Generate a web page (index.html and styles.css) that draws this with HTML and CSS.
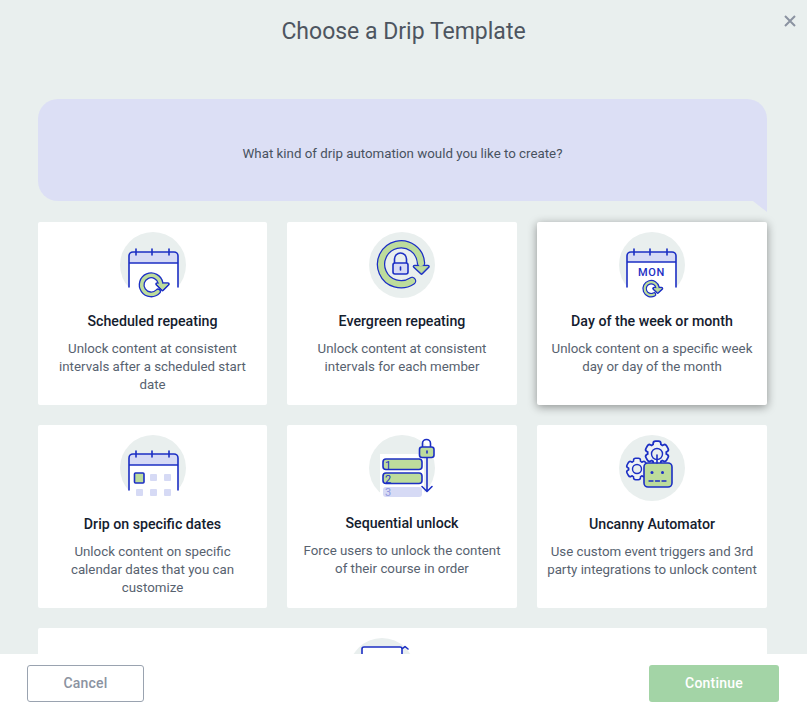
FILE: index.html
```html
<!DOCTYPE html>
<html lang="en">
<head>
<meta charset="UTF-8">
<meta name="viewport" content="width=device-width, initial-scale=1.0">
<title>Choose a Drip Template</title>
<link rel="stylesheet" href="styles.css">
</head>
<body>
    <div class="modal">
        <header class="modal-head">
            <h1>Choose a Drip Template</h1>
            <button class="close" aria-label="Close">
                <svg width="12" height="12" viewBox="0 0 12 12"><path d="M1 1L11 11M11 1L1 11"/></svg>
            </button>
        </header>

        <div class="modal-body">
            <div class="bubble">What kind of drip automation would you like to create?</div>

            <div class="cards">
                <div class="card">
                    <svg class="icon" width="80" height="80" viewBox="0 0 80 80">
                        <circle class="disc" cx="40" cy="40" r="33"/>
                        <rect class="paper" x="16" y="38" width="49" height="38"/>
                        <path class="lilac" d="M16 38V31a4 4 0 0 1 4-4H61a4 4 0 0 1 4 4V38Z"/>
                        <path class="line" d="M16 62V31a4 4 0 0 1 4-4H61a4 4 0 0 1 4 4V62M16 38H65M23 24V30M39 24V30M56 24V30"/>
                        <path class="ring-out" d="M45 66.500A9.500 9.500 0 1 1 47.500 58"/>
                        <path class="head-out" d="M44 59H55L49.500 64.500Z"/>
                        <path class="ring-in" d="M45 66.500A9.500 9.500 0 1 1 47.500 58"/>
                        <path class="head-in" d="M44 59H55L49.500 64.500Z"/>
                    </svg>
                    <h3>Scheduled repeating</h3>
                    <p>Unlock content at consistent intervals after a scheduled start date</p>
                </div>

                <div class="card">
                    <svg class="icon" width="80" height="80" viewBox="0 0 80 80">
                        <circle class="disc" cx="40" cy="40" r="33"/>
                        <path class="ring-out big" d="M50 56A20 20 0 1 1 59 38"/>
                        <path class="head-out" d="M52.500 41.500H66L59.500 48Z"/>
                        <path class="ring-in big" d="M50 56A20 20 0 1 1 59 38"/>
                        <path class="head-in" d="M52.500 41.500H66L59.500 48Z"/>
                        <path class="line" d="M32.500 38V34a6 6 0 0 1 12 0V38"/>
                        <rect class="lilac line" x="31" y="38" width="15" height="11" rx="2"/>
                        <path class="line" d="M38.500 42V45"/>
                    </svg>
                    <h3>Evergreen repeating</h3>
                    <p>Unlock content at consistent intervals for each member</p>
                </div>

                <div class="card selected">
                    <svg class="icon" width="80" height="80" viewBox="0 0 80 80">
                        <circle class="disc" cx="40" cy="40" r="33"/>
                        <rect class="paper" x="15" y="37" width="49" height="38"/>
                        <path class="lilac" d="M15 37V31a4 4 0 0 1 4-4H60a4 4 0 0 1 4 4V37Z"/>
                        <path class="line" d="M15 62V31a4 4 0 0 1 4-4H60a4 4 0 0 1 4 4V62M15 37H64M22 24V30M38 24V30M55 24V30"/>
                        <text class="mon" x="39.500" y="51">MON</text>
                        <path class="ring-out small" d="M42 69.500A6.500 6.500 0 1 1 45.500 62.500"/>
                        <path class="head-out" d="M42 63.500H49.500L45.700 67Z"/>
                        <path class="ring-in small" d="M42 69.500A6.500 6.500 0 1 1 45.500 62.500"/>
                        <path class="head-in" d="M42 63.500H49.500L45.700 67Z"/>
                    </svg>
                    <h3>Day of the week or month</h3>
                    <p>Unlock content on a specific week day or day of the month</p>
                </div>

                <div class="card">
                    <svg class="icon" width="80" height="80" viewBox="0 0 80 80">
                        <circle class="disc" cx="40" cy="40" r="33"/>
                        <rect class="paper" x="16" y="37" width="49" height="38"/>
                        <path class="lilac" d="M16 37V30a4 4 0 0 1 4-4H61a4 4 0 0 1 4 4V37Z"/>
                        <path class="line" d="M16 62V30a4 4 0 0 1 4-4H61a4 4 0 0 1 4 4V62M16 37H65M23 23V29M39 23V29M56 23V29"/>
                        <rect class="green line" x="21.500" y="45" width="9.500" height="10" rx="1"/>
                        <rect class="lilac" x="37" y="46" width="7" height="7" rx="1"/>
                        <rect class="lilac" x="51" y="46" width="7" height="7" rx="1"/>
                        <rect class="lilac" x="23" y="61" width="7" height="7" rx="1"/>
                        <rect class="lilac" x="37" y="61" width="7" height="7" rx="1"/>
                        <rect class="lilac" x="51" y="61" width="7" height="7" rx="1"/>
                    </svg>
                    <h3>Drip on specific dates</h3>
                    <p>Unlock content on specific calendar dates that you can customize</p>
                </div>

                <div class="card">
                    <svg class="icon" width="80" height="80" viewBox="0 0 80 80">
                        <circle class="disc" cx="40" cy="40" r="33"/>
                        <rect class="paper" x="18" y="26" width="44" height="50"/>
                        <rect class="green line" x="21" y="31" width="39" height="10.500" rx="3"/>
                        <rect class="green line" x="21" y="45" width="39" height="10.500" rx="3"/>
                        <rect class="lilac" x="21" y="59" width="39" height="10" rx="3"/>
                        <text class="num" x="23" y="40.500">1</text>
                        <text class="num" x="23" y="54.500">2</text>
                        <text class="num faded" x="23" y="68">3</text>
                        <path class="line" d="M65 30V63M60 58.500L65 63.500L70 58.500M60.500 19V15.500a4 4 0 0 1 8 0V19"/>
                        <rect class="green line" x="57.500" y="19" width="14.500" height="10.500" rx="2.500"/>
                        <path class="line" d="M65 23V25"/>
                    </svg>
                    <h3 class="up">Sequential unlock</h3>
                    <p>Force users to unlock the content of their course in order</p>
                </div>

                <div class="card">
                    <svg class="icon" width="80" height="80" viewBox="0 0 80 80">
                        <defs>
                            <g id="gear">
                                <circle cx="0" cy="0" r="8.500"/>
                                <rect x="-3" y="-11" width="6" height="22" rx="1.500"/>
                                <rect x="-3" y="-11" width="6" height="22" rx="1.500" transform="rotate(60)"/>
                                <rect x="-3" y="-11" width="6" height="22" rx="1.500" transform="rotate(120)"/>
                            </g>
                        </defs>
                        <circle class="disc" cx="40" cy="40" r="33"/>
                        <use class="gear-out" href="#gear" transform="translate(45 25)"/>
                        <use class="gear-in" href="#gear" transform="translate(45 25)"/>
                        <circle class="hole" cx="45" cy="26" r="5.500"/>
                        <use class="gear-out" href="#gear" transform="translate(25 41) scale(.9)"/>
                        <use class="gear-in" href="#gear" transform="translate(25 41) scale(.9)"/>
                        <circle class="hole" cx="25" cy="41" r="4.500"/>
                        <rect class="green line" x="32" y="35" width="28" height="24" rx="4"/>
                        <path class="line" d="M45 27V35"/>
                        <circle class="dot" cx="40" cy="44.500" r="1.500"/>
                        <circle class="dot" cx="50.500" cy="44.500" r="1.500"/>
                        <path class="line thin-line" d="M37 53H41M43.500 53H47.500M50 53H54"/>
                    </svg>
                    <h3>Uncanny Automator</h3>
                    <p>Use custom event triggers and 3rd party integrations to unlock content</p>
                </div>

                <div class="card wide">
                    <svg class="icon" width="80" height="80" viewBox="0 0 80 80">
                        <circle class="disc" cx="40" cy="40" r="33"/>
                        <rect class="paper" x="20" y="16" width="40" height="50"/>
                        <path class="line" d="M20 24V18a2 2 0 0 1 2-2H58a2 2 0 0 1 2 2V24M60 18L63 15.500L66 18"/>
                    </svg>
                </div>
            </div>
        </div>

        <footer class="modal-foot">
            <button class="btn btn-cancel">Cancel</button>
            <button class="btn btn-continue">Continue</button>
        </footer>
    </div>
</body>
</html>
```

FILE: styles.css
```css
* {
    box-sizing: border-box;
}
body {
    margin: 0;
    font-family: Roboto, "Liberation Sans", sans-serif;
    background-color: #e9efee;
    color: #4e5b6b;
}
.modal {
    display: flex;
    flex-direction: column;
    height: 100vh;
    overflow: hidden;
}
.modal-head {
    position: relative;
    flex: none;
    height: 99px;
    padding-top: 18px;
    text-align: center;
}
.modal-head h1 {
    margin: 0;
    font-size: 23px;
    line-height: 28px;
    font-weight: 400;
    color: #4d5560;
}
.close {
    position: absolute;
    top: 15px;
    right: 11px;
    padding: 0;
    border: none;
    background: none;
    line-height: 0;
}
.close path {
    fill: none;
    stroke: #8b93a1;
    stroke-width: 2;
}
.modal-body {
    flex: 1;
    min-height: 0;
    overflow: hidden;
    padding: 0 40px 0 38px;
}
.bubble {
    position: relative;
    display: flex;
    align-items: center;
    justify-content: center;
    height: 102px;
    margin-bottom: 21px;
    padding-top: 6px;
    border-radius: 20px 20px 0 20px;
    background-color: #dcdff5;
    font-size: 13.3px;
    color: #48525f;
}
.bubble::after {
    content: "";
    position: absolute;
    right: 0;
    top: 100%;
    width: 14px;
    height: 11px;
    background-color: #dcdff5;
    clip-path: polygon(0 0, 100% 0, 100% 100%);
}
.cards {
    display: grid;
    grid-template-columns: 229px 230px 230px;
    grid-auto-rows: 183px;
    gap: 20px;
}
.card {
    padding: 3px 10px 0;
    border-radius: 2px;
    background-color: #fff;
    text-align: center;
}
.card.selected {
    box-shadow: 0 2px 10px rgba(0, 0, 0, 0.4);
}
.card.wide {
    grid-column: 1 / -1;
}
.card.wide .icon {
    display: inline-block;
    margin-right: 41px;
}
.card h3 {
    margin: 6px 0 9px;
    font-size: 14.2px;
    line-height: 20px;
    font-weight: 500;
    color: #14202e;
}
.card h3.up {
    margin-top: 5px;
}
.card p {
    margin: 0;
    font-size: 13.3px;
    line-height: 18px;
    color: #57626f;
}
.icon {
    display: block;
    margin: 0 auto;
}
.disc {
    fill: #e9efee;
}
.paper {
    fill: #fff;
}
.lilac {
    fill: #d6daf5;
}
.green {
    fill: #bddc9c;
}
.line {
    stroke: #1c2fc4;
    stroke-width: 1.6;
    stroke-linecap: round;
    stroke-linejoin: round;
}
path.line {
    fill: none;
}
.thin-line {
    stroke-width: 1.3;
}
.ring-out {
    fill: none;
    stroke: #1c2fc4;
    stroke-width: 6;
    stroke-linecap: round;
}
.ring-in {
    fill: none;
    stroke: #bddc9c;
    stroke-width: 3.4;
    stroke-linecap: round;
}
.ring-out.big {
    stroke-width: 8.5;
}
.ring-in.big {
    stroke-width: 6;
}
.ring-out.small {
    stroke-width: 4.6;
}
.ring-in.small {
    stroke-width: 2.2;
}
.head-out {
    fill: #1c2fc4;
    stroke: #1c2fc4;
    stroke-width: 3.6;
    stroke-linejoin: round;
}
.head-in {
    fill: #bddc9c;
    stroke: #bddc9c;
    stroke-width: 0.8;
    stroke-linejoin: round;
}
.mon {
    font-family: Roboto, sans-serif;
    font-size: 11px;
    font-weight: 500;
    letter-spacing: 0.6px;
    text-anchor: middle;
    fill: #1c2fc4;
}
.num {
    font-family: Roboto, sans-serif;
    font-size: 11px;
    fill: #1c2fc4;
}
.num.faded {
    fill: #8f97e0;
}
.gear-out {
    fill: #1c2fc4;
    stroke: #1c2fc4;
    stroke-width: 3.4;
}
.gear-in {
    fill: #eef2f4;
}
.hole {
    fill: #e9efee;
    stroke: #1c2fc4;
    stroke-width: 1.4;
}
.dot {
    fill: #1c2fc4;
}
.modal-foot {
    flex: none;
    display: flex;
    justify-content: space-between;
    align-items: flex-start;
    height: 55px;
    padding: 11px 28px 0 27px;
    background-color: #fff;
}
.btn {
    height: 37px;
    padding-bottom: 3px;
    border-radius: 3px;
    font-family: inherit;
    font-size: 14px;
    font-weight: 500;
    letter-spacing: 0.2px;
}
.btn-cancel {
    width: 117px;
    border: 1px solid #9aa3b0;
    background-color: #fff;
    color: #8b93a1;
}
.btn-continue {
    width: 130px;
    border: none;
    background-color: #a3d4a6;
    color: #fff;
}
```
